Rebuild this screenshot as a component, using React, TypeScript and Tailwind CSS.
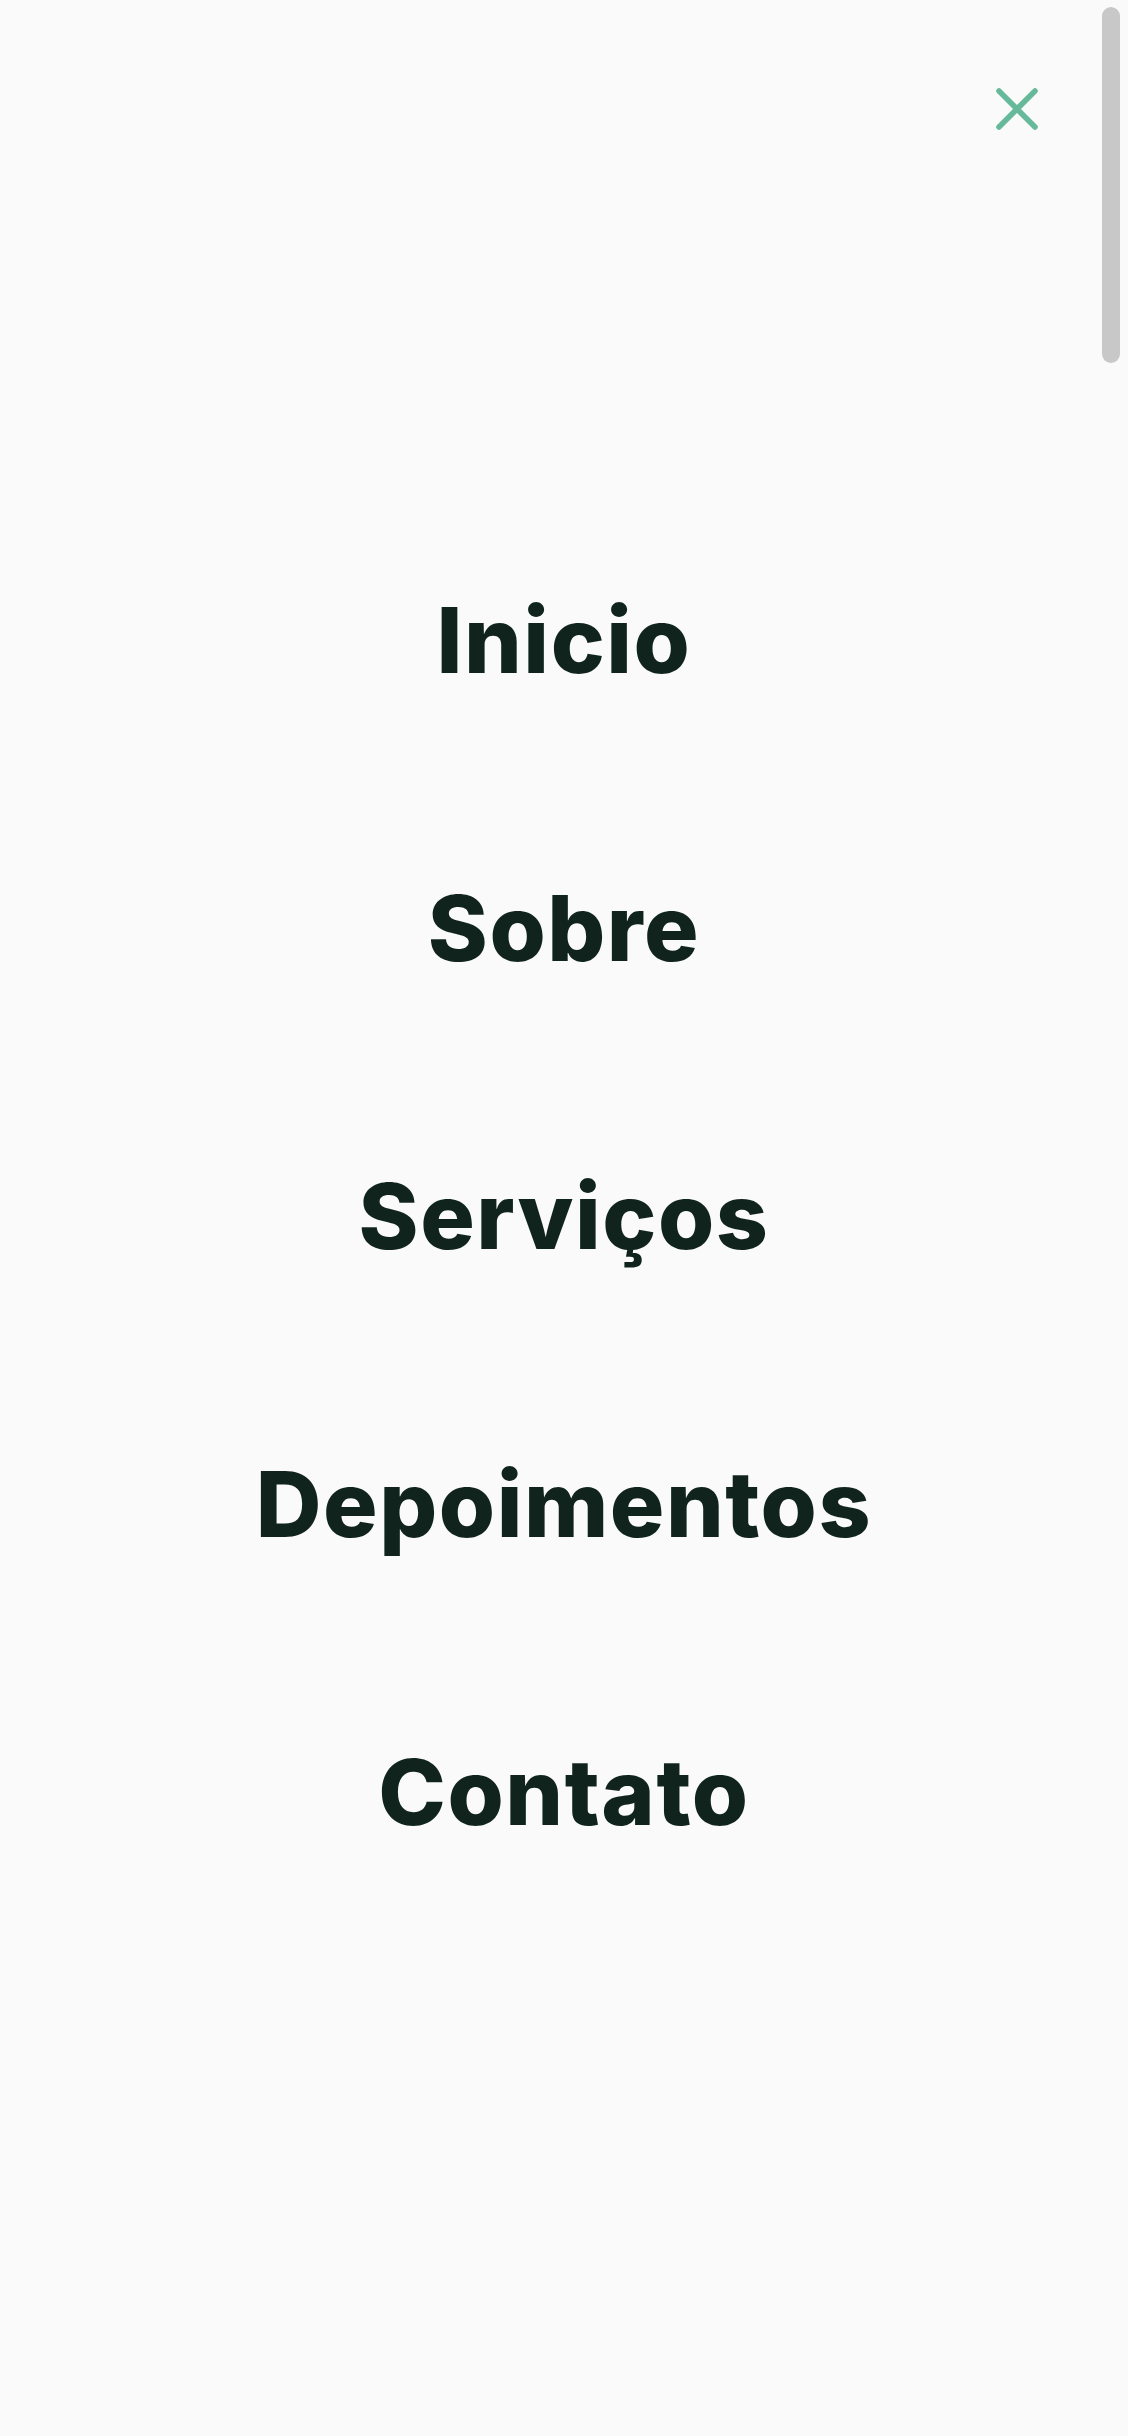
import React from "react";

const items = ["Inicio", "Sobre", "Serviços", "Depoimentos", "Contato"];

export default function App() {
  return (
    <div className="relative w-[1128px] h-[2436px] bg-[#fafafa] overflow-hidden">
      <button className="absolute left-[990px] top-[82px] w-[54px] h-[54px] flex items-center justify-center" aria-label="Fechar">
        <svg width="46" height="46" viewBox="0 0 46 46" fill="none">
          <line x1="5" y1="5" x2="41" y2="41" stroke="#66b99a" strokeWidth="5.5" strokeLinecap="round" />
          <line x1="41" y1="5" x2="5" y2="41" stroke="#66b99a" strokeWidth="5.5" strokeLinecap="round" />
        </svg>
      </button>
      <div className="absolute left-[1102px] top-[7px] w-[18px] h-[356px] rounded-full bg-[#c8c8c8]" />
      <nav className="flex flex-col items-center pt-[496px]">
        {items.map((t) => (
          <a
            key={t}
            className="block h-[288px] leading-[288px] text-[91px] font-extrabold text-[#10241d] tracking-[1.5px]"
            style={{ fontFamily: "Inter, 'Noto Sans', sans-serif" }}
          >
            {t}
          </a>
        ))}
      </nav>
    </div>
  );
}
